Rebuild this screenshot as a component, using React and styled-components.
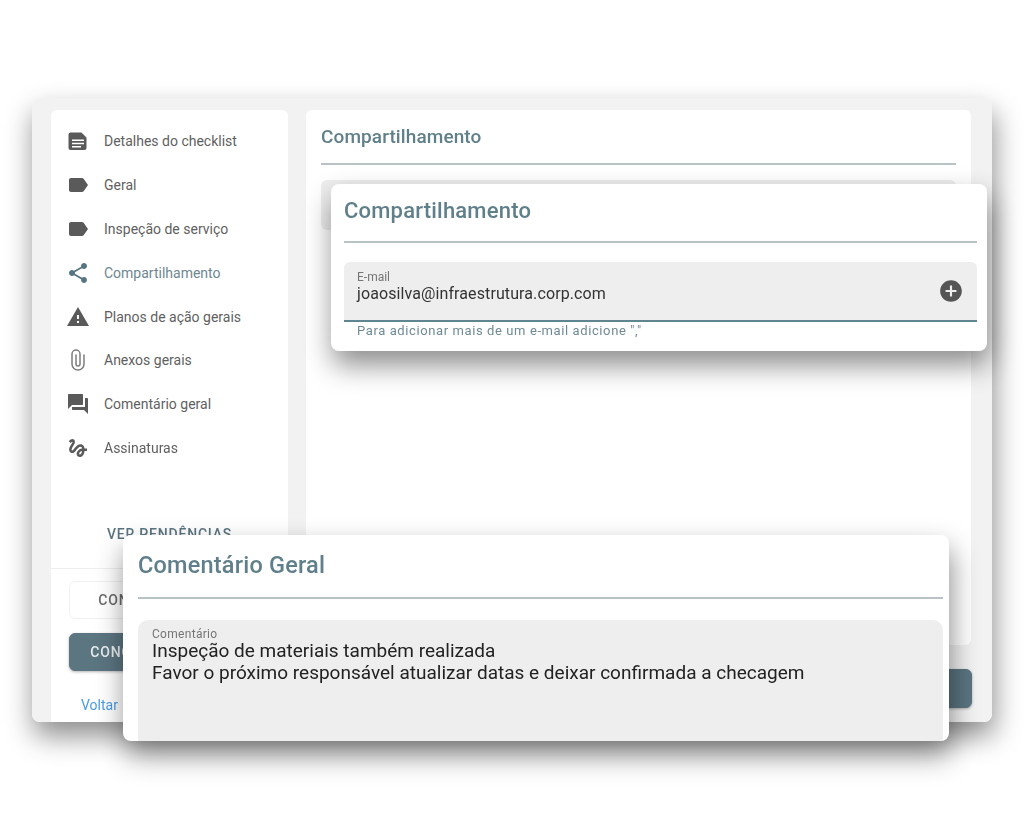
import styled, { createGlobalStyle } from "styled-components"
import {
  MdAddCircle,
  MdGesture,
  MdLabel,
  MdQuestionAnswer,
  MdShare,
  MdWarning,
} from "react-icons/md"

const GlobalStyle = createGlobalStyle`
  html, body {
    margin: 0;
    background: #fff;
    font-family: Roboto, "Liberation Sans", sans-serif;
  }
  * { box-sizing: border-box; }
`

const Page = styled.div`
  position: relative;
  width: 1024px;
  height: 819px;
  padding: 98px 32px 0;
  overflow: hidden;
  filter: blur(0.35px);
`
const AppWindow = styled.div`
  display: flex;
  gap: 18px;
  height: 624px;
  padding: 12px 20px 0 19px;
  background: #f2f2f2;
  border-radius: 8px;
  overflow: hidden;
`
const Shadowed = styled.div`
  border-radius: 8px;
  box-shadow: 2px 14px 28px rgba(0, 0, 0, 0.45);
`
const Sidebar = styled.aside`
  display: flex;
  flex-direction: column;
  width: 237px;
  flex-shrink: 0;
  background: #fff;
  border-radius: 6px 6px 0 0;
`
const Nav = styled.nav`
  display: flex;
  flex-direction: column;
  padding-top: 9px;
`
const NavItem = styled.div`
  display: flex;
  align-items: center;
  height: 43.9px;
  padding-left: 15px;
  font-size: 14px;
  color: ${props => (props.$active ? "#6d8791" : "#5f5f5f")};
  svg {
    width: 24px;
    height: 24px;
    margin-right: 14px;
    flex-shrink: 0;
    color: ${props => (props.$active ? "#557582" : "#5a5a5a")};
  }
`
const Pending = styled.div`
  margin-top: 56px;
  text-align: center;
  font-size: 14px;
  font-weight: 500;
  letter-spacing: 0.8px;
  color: #5b7581;
`
const SidebarFooter = styled.div`
  display: flex;
  flex-direction: column;
  margin-top: 26px;
  padding: 12px 18px 0;
  border-top: 1px solid #eeeeee;
`
const Button = styled.div`
  display: flex;
  align-items: center;
  justify-content: center;
  height: 38px;
  border-radius: 6px;
  font-size: 14px;
  font-weight: 500;
  letter-spacing: 0.8px;
  white-space: nowrap;
  border: 1px solid ${props => (props.$primary ? "#5b7581" : "#f0f0f0")};
  background: ${props => (props.$primary ? "#5b7581" : "#fff")};
  color: ${props => (props.$primary ? "#e8edef" : "#6b6b6b")};
  box-shadow: ${props => (props.$primary ? "0 1px 3px rgba(0,0,0,.3)" : "none")};
`
const ConfirmButton = styled(Button)`
  margin-top: 14px;
`
const BackLink = styled.a`
  margin: 26px 0 0 12px;
  font-size: 14px;
  color: #4a9be8;
`
const Main = styled.main`
  display: flex;
  flex-direction: column;
  flex: 1;
`
const MainCard = styled.section`
  height: 535px;
  margin-right: 1px;
  padding: 15px 15px 0;
  background: #fff;
  border-radius: 6px;
`
const MainTitle = styled.h2`
  margin: 0;
  padding-bottom: 14px;
  border-bottom: 2px solid #b9c2c4;
  font-size: 19px;
  line-height: 24px;
  font-weight: 500;
  letter-spacing: 0.1px;
  color: #5f7f8a;
`
const HiddenField = styled.div`
  height: 50px;
  margin-top: 15px;
  background: #eeeeee;
  border-radius: 6px;
`
const MainActions = styled.div`
  display: flex;
  justify-content: flex-end;
  margin-top: 24px;
`
const SaveButton = styled(Button)`
  width: 140px;
  height: 39px;
`
const Overlay = styled(Shadowed)`
  position: absolute;
  background: #fff;
`
const ShareOverlay = styled(Overlay)`
  left: 331px;
  top: 184px;
  width: 656px;
  height: 167px;
  padding: 13px 10px 0 13px;
`
const CommentOverlay = styled(Overlay)`
  left: 123px;
  top: 535px;
  width: 826px;
  height: 206px;
  padding: 16px 6px 0 15px;
`
const OverlayTitle = styled.h2`
  margin: 0;
  font-size: ${props => props.$size}px;
  line-height: 28px;
  font-weight: 500;
  letter-spacing: 0.2px;
  color: #5f7f8a;
  border-bottom: 2px solid #b9c2c4;
  padding-bottom: ${props => props.$pad}px;
`
const EmailField = styled.div`
  display: flex;
  align-items: center;
  justify-content: space-between;
  height: 60px;
  margin-top: 19px;
  padding: 0 13px 0 13px;
  background: #eeeeee;
  border-radius: 6px 6px 0 0;
  border-bottom: 2px solid #5f8590;
  svg {
    width: 26px;
    height: 26px;
    color: #555;
  }
`
const FieldText = styled.div`
  display: flex;
  flex-direction: column;
  align-self: flex-start;
  margin-top: 9px;
`
const FieldLabel = styled.span`
  font-size: 12px;
  line-height: 12px;
  color: #757575;
`
const CommentLabel = styled(FieldLabel)`
  letter-spacing: 0.3px;
`
const FieldValue = styled.span`
  font-size: 16px;
  line-height: 22px;
  letter-spacing: 0.1px;
  color: #333;
`
const Hint = styled.p`
  margin: 1px 0 0 13px;
  font-size: 13px;
  line-height: 16px;
  letter-spacing: 0.6px;
  color: #6f8a94;
`
const CommentField = styled.div`
  display: flex;
  flex-direction: column;
  height: 121px;
  margin-top: 21px;
  padding: 8px 14px;
  background: #eeeeee;
  border-radius: 10px 10px 0 0;
`
const CommentText = styled.div`
  font-size: 19px;
  line-height: 21.5px;
  color: #222;
`

// desenhados à mão: nos pacotes o documento é mais estreito e o clipe mais grosso
const ChecklistIcon = () => (
  <svg viewBox="0 0 24 24">
    <path
      fill="currentColor"
      fillRule="evenodd"
      d="M4.500 3.500h11l5 5v10.500a2 2 0 0 1-2 2h-14a2 2 0 0 1-2-2v-13.500a2 2 0 0 1 2-2zM6 10.500v1.600h12v-1.600zM6 13.700v1.600h12v-1.600zM6 16.900v1.600h9v-1.600z"
    />
  </svg>
)
const ClipIcon = () => (
  <svg viewBox="0 0 24 24">
    <path
      fill="none"
      stroke="#7d7d7d"
      strokeWidth="1.500"
      strokeLinecap="round"
      d="M18 7v9a6 6 0 0 1-12 0V6a4 4 0 0 1 8 0v10a2 2 0 0 1-4 0V7"
    />
  </svg>
)

const navItems = [
  { icon: ChecklistIcon, label: "Detalhes do checklist" },
  { icon: MdLabel, label: "Geral" },
  { icon: MdLabel, label: "Inspeção de serviço" },
  { icon: MdShare, label: "Compartilhamento", active: true },
  { icon: MdWarning, label: "Planos de ação gerais" },
  { icon: ClipIcon, label: "Anexos gerais" },
  { icon: MdQuestionAnswer, label: "Comentário geral" },
  { icon: MdGesture, label: "Assinaturas" },
]

const App = () => {
  return (
    <Page>
      <GlobalStyle />
      <Shadowed>
        <AppWindow>
          <Sidebar>
            <Nav>
              {navItems.map(({ icon: Icon, label, active }) => (
                <NavItem key={label} $active={active}>
                  <Icon />
                  {label}
                </NavItem>
              ))}
            </Nav>
            <Pending>VER PENDÊNCIAS</Pending>
            <SidebarFooter>
              <Button>CONTINUAR DEPOIS</Button>
              <ConfirmButton $primary>CONCLUIR CHECKLIST</ConfirmButton>
              <BackLink>Voltar</BackLink>
            </SidebarFooter>
          </Sidebar>
          <Main>
            <MainCard>
              <MainTitle>Compartilhamento</MainTitle>
              <HiddenField />
            </MainCard>
            <MainActions>
              <SaveButton $primary />
            </MainActions>
          </Main>
        </AppWindow>
      </Shadowed>

      <ShareOverlay>
        <OverlayTitle $size={22} $pad={16}>Compartilhamento</OverlayTitle>
        <EmailField>
          <FieldText>
            <FieldLabel>E-mail</FieldLabel>
            <FieldValue>joaosilva@infraestrutura.corp.com</FieldValue>
          </FieldText>
          <MdAddCircle />
        </EmailField>
        <Hint>Para adicionar mais de um e-mail adicione ","</Hint>
      </ShareOverlay>

      <CommentOverlay>
        <OverlayTitle $size={23.5} $pad={18}>Comentário Geral</OverlayTitle>
        <CommentField>
          <CommentLabel>Comentário</CommentLabel>
          <CommentText>
            Inspeção de materiais também realizada
            <br />
            Favor o próximo responsável atualizar datas e deixar confirmada a checagem
          </CommentText>
        </CommentField>
      </CommentOverlay>
    </Page>
  )
}

export default App
